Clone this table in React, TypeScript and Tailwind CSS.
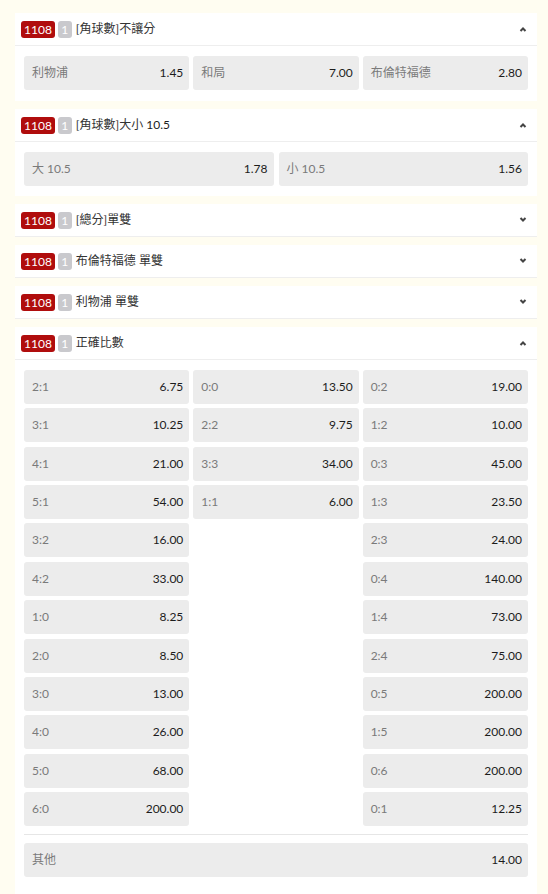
import type { ReactNode } from "react";

const font = { fontFamily: "Lato, 'Noto Sans CJK TC', sans-serif" };

function Chevron({ up }: { up: boolean }) {
  return (
    <svg width="8" height="6" viewBox="0 0 8 6" className="text-[#444]">
      <polyline
        points={up ? "1.5,5 4,2.5 6.5,5" : "1.5,1 4,3.5 6.5,1"}
        fill="none"
        stroke="currentColor"
        strokeWidth="2"
      />
    </svg>
  );
}

function Header({ title, open }: { title: ReactNode; open: boolean }) {
  return (
    <div className="flex h-[33px] items-center border-b border-[#eeeeee] pl-[6px] pr-[10px]">
      <span className="h-[17px] rounded-[3px] bg-[#b00d0d] px-[3px] text-[12px] leading-[17px] text-white">1108</span>
      <span className="ml-[3px] h-[17px] w-[14px] rounded-[3px] bg-[#c9c9cd] text-center text-[12px] leading-[17px] text-white">1</span>
      <span className="ml-[4px] text-[12px] text-[#333]">{title}</span>
      <span className="ml-auto flex">
        <Chevron up={open} />
      </span>
    </div>
  );
}

function Section({ title, open, children }: { title: ReactNode; open: boolean; children?: ReactNode }) {
  return (
    <div className="mb-[8px] bg-white">
      <Header title={title} open={open} />
      {children}
    </div>
  );
}

function Tile({ label, odds }: { label: string; odds: string }) {
  return (
    <div className="flex h-[34px] items-center justify-between rounded-[3px] bg-[#ececec] pl-[8px] pr-[6px] text-[12px]">
      <span className="text-[#7a7a7a]">{label}</span>
      <span className="text-[#1c1c1c]">{odds}</span>
    </div>
  );
}

const col1 = [
  ["2:1", "6.75"], ["3:1", "10.25"], ["4:1", "21.00"], ["5:1", "54.00"], ["3:2", "16.00"], ["4:2", "33.00"],
  ["1:0", "8.25"], ["2:0", "8.50"], ["3:0", "13.00"], ["4:0", "26.00"], ["5:0", "68.00"], ["6:0", "200.00"],
];
const col2 = [["0:0", "13.50"], ["2:2", "9.75"], ["3:3", "34.00"], ["1:1", "6.00"]];
const col3 = [
  ["0:2", "19.00"], ["1:2", "10.00"], ["0:3", "45.00"], ["1:3", "23.50"], ["2:3", "24.00"], ["0:4", "140.00"],
  ["1:4", "73.00"], ["2:4", "75.00"], ["0:5", "200.00"], ["1:5", "200.00"], ["0:6", "200.00"], ["0:1", "12.25"],
];

function Column({ items }: { items: string[][] }) {
  return (
    <div className="flex flex-col gap-y-[4.36px]">
      {items.map(([l, o]) => (
        <Tile key={l} label={l} odds={o} />
      ))}
    </div>
  );
}

export default function App() {
  return (
    <div className="min-h-[894px] bg-[#fffdf1] pt-[13px] pl-[15px] pr-[11px]" style={font}>
      <Section title="[角球數]不讓分" open>
        <div className="grid grid-cols-3 gap-x-[4px] px-[9px] pt-[10px] pb-[11px]">
          <Tile label="利物浦" odds="1.45" />
          <Tile label="和局" odds="7.00" />
          <Tile label="布倫特福德" odds="2.80" />
        </div>
      </Section>
      <Section
        title={
          <>
            [角球數]大小 <span className="text-[#1c1c1c]">10.5</span>
          </>
        }
        open
      >
        <div className="grid grid-cols-2 gap-x-[5px] px-[9px] pt-[10px] pb-[10px]">
          <Tile label="大 10.5" odds="1.78" />
          <Tile label="小 10.5" odds="1.56" />
        </div>
      </Section>
      <Section title="[總分]單雙" open={false} />
      <Section title="布倫特福德 單雙" open={false} />
      <Section title="利物浦 單雙" open={false} />
      <div className="bg-white">
        <Header title="正確比數" open />
        <div className="px-[9px] pt-[10px] pb-[20px]">
          <div className="grid grid-cols-3 items-start gap-x-[4px]">
            <Column items={col1} />
            <Column items={col2} />
            <Column items={col3} />
          </div>
          <div className="mt-[8px] border-t border-[#e6e6e6] pt-[8px]">
            <Tile label="其他" odds="14.00" />
          </div>
        </div>
      </div>
    </div>
  );
}
